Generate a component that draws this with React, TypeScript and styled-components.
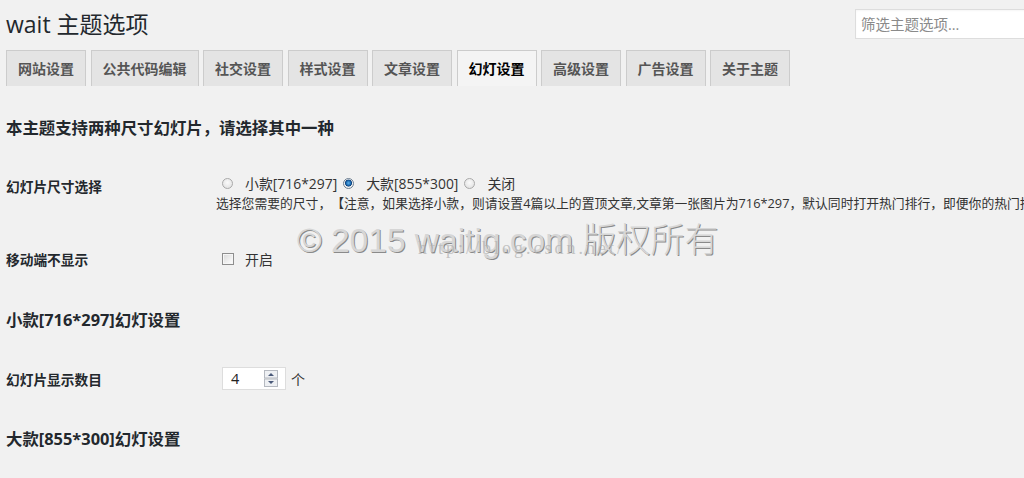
import React from "react";
import styled, { createGlobalStyle } from "styled-components";

const Global = createGlobalStyle`
  html, body { margin: 0; padding: 0; background: #f1f1f1; overflow: hidden; }
  body {
    font-family: "Open Sans", "Noto Sans CJK SC", sans-serif;
    color: #444;
    text-spacing-trim: space-all;
  }
  * { box-sizing: border-box; }
`;

const Page = styled.div`
  position: relative;
  width: 1024px;
  height: 478px;
  overflow: hidden;
  padding-left: 6px;
`;

const Header = styled.header`
  display: flex;
  align-items: center;
  justify-content: space-between;
  padding-top: 9px;
  height: 39px;
`;

const Title = styled.h1`
  margin: 0;
  font-size: 23px;
  font-weight: 400;
  line-height: 30px;
  color: #23282d;
`;

const Search = styled.input`
  width: 179px;
  height: 30px;
  margin-right: -10px;
  border: 1px solid #ddd;
  background: #fff;
  padding: 0 5px;
  font-family: "Open Sans", "Noto Sans CJK SC", sans-serif;
  font-size: 14.5px;
  color: #333;
  outline: none;
  box-shadow: inset 0 1px 2px rgba(0, 0, 0, 0.04);
  &::placeholder { color: #8a8a8a; }
`;

const Tabs = styled.nav`
  display: flex;
  gap: 4.5px;
  margin-top: 11px;
  height: 36px;
`;

const Tab = styled.a<{ $active?: boolean }>`
  display: flex;
  align-items: center;
  height: 36px;
  padding: 1px 11px 0;
  border: 1px solid #ccc;
  border-bottom: none;
  background: ${(p) => (p.$active ? "#f4f4f4" : "#e4e4e4")};
  color: ${(p) => (p.$active ? "#000" : "#555")};
  font-size: 14px;
  font-weight: 700;
  line-height: 20px;
  white-space: nowrap;
`;

const SectionTitle = styled.h2<{ $top: number }>`
  margin: ${(p) => p.$top}px 0 0;
  font-size: 16.4px;
  font-weight: 700;
  line-height: 20px;
  color: #23282d;
`;

const Row = styled.div<{ $top: number }>`
  display: grid;
  grid-template-columns: 210px 1fr;
  margin-top: ${(p) => p.$top}px;
`;

const Label = styled.div<{ $offset: number }>`
  padding-top: ${(p) => p.$offset}px;
  font-size: 13.7px;
  font-weight: 700;
  line-height: 20px;
  color: #23282d;
  white-space: nowrap;
`;

const Field = styled.div`
  display: flex;
  flex-direction: column;
  min-width: 0;
`;

const Line = styled.div<{ $height?: number }>`
  display: flex;
  align-items: center;
  height: ${(p) => p.$height ?? 20}px;
  font-size: 13.9px;
  color: #333;
  white-space: nowrap;
`;

const Description = styled.p`
  margin: 0;
  font-size: 12.8px;
  line-height: 20px;
  color: #333;
  white-space: nowrap;
`;

const Radio = styled.span<{ $checked?: boolean }>`
  display: inline-block;
  width: 11px;
  height: 11px;
  margin: 0 12px 0 6px;
  border-radius: 50%;
  border: 1px solid ${(p) => (p.$checked ? "#6d7f92" : "#a9a9a9")};
  background: ${(p) =>
    p.$checked
      ? "radial-gradient(circle at 50% 45%, #5fb0ea 0, #1d6fb5 2.2px, #0d3f7a 3.2px, #f4f4f4 3.8px, #e2e2e2 100%)"
      : "radial-gradient(circle at 50% 40%, #fafafa 0, #e6e6e6 70%, #d2d2d2 100%)"};
  flex-shrink: 0;
`;

const Checkbox = styled.span`
  display: inline-block;
  width: 12px;
  height: 12px;
  margin: 0 11px 0 6px;
  border: 1px solid #8e8e8e;
  background: linear-gradient(135deg, #d8d8d8 0%, #f0f0f0 60%, #ffffff 100%);
  box-shadow: inset 0 0 0 1px #f6f6f6;
  flex-shrink: 0;
`;

const NumberBox = styled.div`
  display: flex;
  align-items: center;
  justify-content: space-between;
  width: 64px;
  height: 23px;
  margin-left: 6px;
  padding: 0 7px 0 8px;
  background: #fff;
  border: 1px solid #ddd;
  font-size: 14.5px;
  color: #222;
`;

const Unit = styled.span`
  margin-left: 5px;
  font-size: 14px;
  color: #333;
`;

const Spin = styled.svg`
  display: block;
`;

const Watermark = styled.div`
  position: absolute;
  left: 297px;
  top: 218px;
  font-family: "Liberation Sans", "Noto Sans CJK SC", sans-serif;
  font-size: 33.5px;
  line-height: 40px;
  font-weight: 400;
  color: #d6d6d6;
  text-shadow: 1px 1px 0 #8a8a8a;
  white-space: nowrap;
  pointer-events: none;
`;

const WatermarkCjk = styled.span`
  font-family: "Noto Sans CJK SC", sans-serif;
  font-weight: 300;
  font-size: 34px;
  margin-left: 2px;
`;

const CsdnMark = styled.div`
  position: absolute;
  left: 418px;
  top: 238px;
  font-family: "Liberation Serif", serif;
  font-size: 18px;
  letter-spacing: 3px;
  line-height: 20px;
  color: rgba(175, 175, 175, 0.7);
  white-space: nowrap;
  pointer-events: none;
`;

const tabs = ["网站设置", "公共代码编辑", "社交设置", "样式设置", "文章设置", "幻灯设置", "高级设置", "广告设置", "关于主题"];

export default function App() {
  return (
    <>
      <Global />
      <Page>
        <Header>
          <Title>wait 主题选项</Title>
          <Search placeholder="筛选主题选项..." />
        </Header>
        <Tabs>
          {tabs.map((t) => (
            <Tab key={t} $active={t === "幻灯设置"}>
              {t}
            </Tab>
          ))}
        </Tabs>

        <SectionTitle $top={32}>本主题支持两种尺寸幻灯片，请选择其中一种</SectionTitle>

        <Row $top={35}>
          <Label $offset={4}>幻灯片尺寸选择</Label>
          <Field>
            <Line>
              <Radio />
              小款[716*297]
              <Radio $checked />
              大款[855*300]
              <Radio />
              关闭
            </Line>
            <Description>
              选择您需要的尺寸，【注意，如果选择小款，则请设置4篇以上的置顶文章,文章第一张图片为716*297，默认同时打开热门排行，即便你的热门排行没有文章也会显示】
            </Description>
          </Field>
        </Row>

        <Row $top={36}>
          <Label $offset={1}>移动端不显示</Label>
          <Field>
            <Line>
              <Checkbox />
              开启
            </Line>
          </Field>
        </Row>

        <SectionTitle $top={40}>小款[716*297]幻灯设置</SectionTitle>

        <Row $top={37}>
          <Label $offset={3}>幻灯片显示数目</Label>
          <Field>
            <Line $height={23}>
              <NumberBox>
                <span>4</span>
                <Spin width="14" height="17" viewBox="0 0 14 17">
                  <rect x="0.5" y="0.5" width="13" height="7.5" fill="#eef0f3" stroke="#b5b9c0" />
                  <rect x="0.5" y="9" width="13" height="7.5" fill="#eef0f3" stroke="#b5b9c0" />
                  <path d="M4 6 L7 3 L10 6 Z" fill="#4a5a7a" />
                  <path d="M4 11 L7 14 L10 11 Z" fill="#4a5a7a" />
                </Spin>
              </NumberBox>
              <Unit>个</Unit>
            </Line>
          </Field>
        </Row>

        <SectionTitle $top={39}>大款[855*300]幻灯设置</SectionTitle>

        <Watermark>
          © 2015 waitig.com<WatermarkCjk> 版权所有</WatermarkCjk>
        </Watermark>
        <CsdnMark>http://blog.csdn.net/</CsdnMark>
      </Page>
    </>
  );
}
